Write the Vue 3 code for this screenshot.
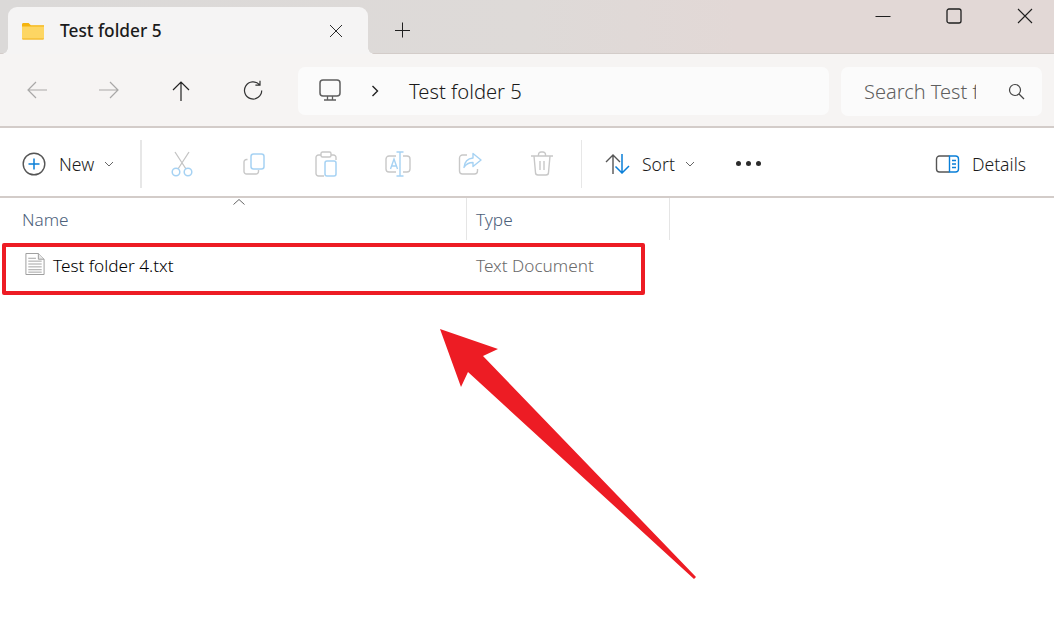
<template>
  <div class="explorer">
    <div class="titlebar">
      <div class="tab">
        <svg class="folder" width="22" height="18" viewBox="0 0 22 18">
          <path d="M0 2.500C0 1.700.6 1 1.400 1h5.200l2.200 2.200H22V5H0z" fill="#f5b40e"/>
          <path d="M0 4.500h22V16c0 .8-.6 1.500-1.400 1.500H1.400C.6 17.500 0 16.800 0 16z" fill="#fdd663"/>
          <path d="M0 16.500h22v.3c0 .4-.4.7-1 .7H1c-.6 0-1-.3-1-.7z" fill="#f2b21c"/>
        </svg>
        <span class="tab-title">Test folder 5</span>
        <svg class="tab-close" width="14" height="14" viewBox="0 0 14 14"><path d="M1 1l12 12M13 1L1 13" stroke="#2b2b2b" fill="none"/></svg>
      </div>
      <svg class="tab-add" width="16" height="16" viewBox="0 0 16 16"><path d="M8.500 .5v15M1 8.500h15" stroke="#1f1f1f" fill="none"/></svg>
      <div class="win-controls">
        <svg width="16" height="16" viewBox="0 0 16 16"><path d="M.5 8.500h15" stroke="#1f1f1f" fill="none"/></svg>
        <svg width="16" height="16" viewBox="0 0 16 16"><rect x="1" y="1" width="14" height="14" rx="2" stroke="#1f1f1f" stroke-width="1.300" fill="none"/></svg>
        <svg width="16" height="16" viewBox="0 0 16 16"><path d="M1 1l14 14M15 1L1 15" stroke="#1f1f1f" stroke-width="1.100" fill="none"/></svg>
      </div>
    </div>

    <div class="navbar">
      <div class="nav-buttons">
        <span class="nav-btn"><svg width="24" height="20" viewBox="0 0 24 20"><path d="M22 10H3M11 2l-8 8 8 8" stroke="#a9a8a7" stroke-width="1.200" fill="none"/></svg></span>
        <span class="nav-btn"><svg width="24" height="20" viewBox="0 0 24 20"><path d="M2 10h19M13 2l8 8-8 8" stroke="#a9a8a7" stroke-width="1.200" fill="none"/></svg></span>
        <span class="nav-btn"><svg width="20" height="22" viewBox="0 0 20 22"><path d="M10 21V2M2 10l8-8 8 8" stroke="#222" stroke-width="1.200" fill="none"/></svg></span>
        <span class="nav-btn"><svg width="20" height="20" viewBox="0 0 20 20"><path d="M16.500 4.700A8.600 8.600 0 1 0 18.700 10.500M17 .8v4.400h-4.600" stroke="#333" stroke-width="1.200" fill="none"/></svg></span>
      </div>
      <div class="address">
        <svg class="monitor" width="22" height="22" viewBox="0 0 22 22">
          <rect x="1" y="1" width="20" height="16" rx="3" stroke="#5f5f5f" stroke-width="1.500" fill="none"/>
          <path d="M8.500 17v3.500M13.500 17v3.500M5 21h12" stroke="#5f5f5f" stroke-width="1.300" fill="none"/>
        </svg>
        <svg class="crumb" width="8" height="12" viewBox="0 0 8 12"><path d="M1.500 1l5 5-5 5" stroke="#222" stroke-width="1.400" fill="none"/></svg>
        <span class="path-text">Test folder 5</span>
      </div>
      <div class="search">
        <span class="search-text">Search Test f</span>
        <svg width="17" height="17" viewBox="0 0 17 17"><circle cx="7" cy="7" r="5.500" stroke="#444" stroke-width="1.200" fill="none"/><path d="M11 11l5 5" stroke="#444" stroke-width="1.300" fill="none"/></svg>
      </div>
    </div>

    <div class="toolbar">
      <div class="new-btn">
        <svg width="24" height="24" viewBox="0 0 24 24">
          <circle cx="12" cy="12" r="10.800" stroke="#555" stroke-width="1.400" fill="none"/>
          <path d="M12 6.500v11M6.500 12h11" stroke="#0a7fd8" stroke-width="1.500" fill="none"/>
        </svg>
        <span>New</span>
        <svg class="chev" width="10" height="6" viewBox="0 0 10 6"><path d="M1 1l4 4 4-4" stroke="#666" fill="none"/></svg>
      </div>
      <i class="sep"></i>
      <div class="actions">
        <span class="act"><svg width="24" height="26" viewBox="0 0 24 26">
          <path d="M5 1l11 17M19 1L8 18" stroke="#c4c4c4" stroke-width="1.300" fill="none"/>
          <circle cx="6" cy="21" r="3.800" stroke="#a6d2f3" stroke-width="1.500" fill="none"/>
          <circle cx="18" cy="21" r="3.800" stroke="#a6d2f3" stroke-width="1.500" fill="none"/>
        </svg></span>
        <span class="act"><svg width="22" height="22" viewBox="0 0 22 22">
          <path d="M4.500 6.500H3.500A2.500 2.500 0 0 0 1 9v9.500A2.500 2.500 0 0 0 3.500 21H13a2.500 2.500 0 0 0 2.500-2.500V17" stroke="#c8c8c8" stroke-width="1.400" fill="none"/>
          <rect x="8" y="1" width="13" height="15" rx="2.500" stroke="#a6d2f3" stroke-width="1.500" fill="#fff"/>
        </svg></span>
        <span class="act"><svg width="22" height="26" viewBox="0 0 22 26">
          <path d="M6 4H3.500A2.500 2.500 0 0 0 1 6.500v16A2.500 2.500 0 0 0 3.500 25H9M16 4h2.500A2.500 2.500 0 0 1 21 6.500V9" stroke="#c8c8c8" stroke-width="1.400" fill="none"/>
          <rect x="6" y="1" width="10" height="5" rx="1.500" stroke="#c8c8c8" stroke-width="1.400" fill="#fff"/>
          <rect x="10" y="10" width="11" height="15" rx="2" stroke="#a6d2f3" stroke-width="1.500" fill="#fff"/>
        </svg></span>
        <span class="act"><svg width="26" height="26" viewBox="0 0 26 26">
          <path d="M11 5H4a3 3 0 0 0-3 3v10a3 3 0 0 0 3 3h7M18 5h4a3 3 0 0 1 3 3v10a3 3 0 0 1-3 3h-4" stroke="#c8c8c8" stroke-width="1.400" fill="none"/>
          <path d="M15 1v24M11.500 1h7M11.500 25h7M5.500 18l3.500-10 3.500 10M6.800 15h4.400" stroke="#a6d2f3" stroke-width="1.400" fill="none"/>
        </svg></span>
        <span class="act"><svg width="24" height="24" viewBox="0 0 24 24">
          <path d="M9 3H4.500A3 3 0 0 0 1.500 6v13a3 3 0 0 0 3 3h12a3 3 0 0 0 3-3v-2" stroke="#c8c8c8" stroke-width="1.400" fill="none"/>
          <path d="M15 1.500L23 8l-8 6.500v-4c-4 0-7 1.500-9 5 .5-5.500 3.500-9 9-9.500z" stroke="#a6d2f3" stroke-width="1.400" fill="#fff" stroke-linejoin="round"/>
        </svg></span>
        <span class="act"><svg width="22" height="25" viewBox="0 0 22 25">
          <path d="M0 5h22M7.500 5V3.500A2.500 2.500 0 0 1 10 1h2a2.500 2.500 0 0 1 2.500 2.500V5M3 5l1.500 16.500A2.500 2.500 0 0 0 7 24h8a2.500 2.500 0 0 0 2.500-2.500L19 5M9 10v9M13 10v9" stroke="#c8c8c8" stroke-width="1.400" fill="none"/>
        </svg></span>
      </div>
      <i class="sep sep-sort"></i>
      <div class="sort-btn">
        <svg width="26" height="20" viewBox="0 0 26 20">
          <path d="M8 20V1M1 8l7-7 7 7" stroke="#555" stroke-width="1.400" fill="none"/>
          <path d="M17 0v19M10.500 12.500l6.500 6.500 7-7" stroke="#0a7fd8" stroke-width="1.500" fill="none"/>
        </svg>
        <span>Sort</span>
        <svg class="chev" width="10" height="6" viewBox="0 0 10 6"><path d="M1 1l4 4 4-4" stroke="#666" fill="none"/></svg>
      </div>
      <div class="dots"><b></b><b></b><b></b></div>
      <div class="details-btn">
        <svg width="25" height="18" viewBox="0 0 24 18">
          <path d="M14 1H4a3 3 0 0 0-3 3v10a3 3 0 0 0 3 3h10" stroke="#555" stroke-width="1.400" fill="none"/>
          <path d="M14 1h6a3 3 0 0 1 3 3v10a3 3 0 0 1-3 3h-6zM16.500 5.500h4M16.500 9h4M16.500 12.500h4" stroke="#0a7fd8" stroke-width="1.400" fill="none"/>
        </svg>
        <span>Details</span>
      </div>
    </div>

    <div class="list-head">
      <div class="col-name">
        <span>Name</span>
        <svg class="caret" width="12" height="6" viewBox="0 0 12 6"><path d="M.5 5.500L6 .5l5.500 5" stroke="#666" fill="none"/></svg>
      </div>
      <div class="col-type"><span>Type</span></div>
    </div>
    <div class="row">
      <div class="cell-name">
        <svg width="20" height="22" viewBox="0 0 20 23">
          <path d="M.5.500h13l6 6v16H.500z" fill="#fff" stroke="#9a9a9a"/>
          <path d="M13.500.5v6h6" fill="#e8e8e8" stroke="#9a9a9a"/>
          <path d="M3 5.500h8M3 8.500h14M3 11.500h14M3 14.500h14M3 17.500h14M3 20h14" stroke="#a0a0a0" fill="none"/>
        </svg>
        <span>Test folder 4.txt</span>
      </div>
      <div class="cell-type">Text Document</div>
    </div>

    <div class="mark-box"></div>
    <svg class="mark-arrow" width="1054" height="631" viewBox="0 0 1054 631">
      <path d="M440 329L498 349 483 356 696 577 694 579 468 372 461 387z" fill="#ed1c24"/>
    </svg>
  </div>
</template>

<script setup>
</script>

<style>
html, body {
  margin: 0;
  background: #fff;
}
</style>

<style scoped>
.explorer {
  position: relative;
  width: 1054px;
  height: 631px;
  overflow: hidden;
  background: #fff;
  font-family: "Noto Sans", sans-serif;
  color: #1b1b1b;
}
.titlebar {
  height: 54px;
  box-sizing: border-box;
  display: flex;
  align-items: flex-end;
  padding-left: 8px;
  background: linear-gradient(90deg, #dbd9d8 0%, #dedad8 50%, #e2d8d6 70%, #e2d8d6 100%);
  border-bottom: 1px solid #d3ccc9;
}
.tab {
  position: relative;
  top: 1px;
  width: 360px;
  height: 47px;
  box-sizing: border-box;
  display: flex;
  align-items: center;
  padding: 0 25px 0 14px;
  background: #f5f4f4;
  border-radius: 9px 9px 0 0;
}
.tab::before,
.tab::after {
  content: "";
  position: absolute;
  bottom: 0;
  width: 6px;
  height: 6px;
}
.tab::before {
  left: -6px;
  background: radial-gradient(circle at 0 0, transparent 5.500px, #f5f4f4 6px);
}
.tab::after {
  right: -6px;
  background: radial-gradient(circle at 100% 0, transparent 5.500px, #f5f4f4 6px);
}
.folder {
  margin-right: 16px;
}
.tab-title {
  flex: 1;
  font-size: 17.300px;
  font-weight: 500;
}
.tab-add {
  margin-left: 26px;
  margin-bottom: 15px;
}
.win-controls {
  margin-left: auto;
  align-self: flex-start;
  display: flex;
  gap: 55px;
  padding: 8px 21px 0 0;
}
.navbar {
  height: 74px;
  box-sizing: border-box;
  display: flex;
  align-items: center;
  padding: 2px 12px 0 1px;
  background: #f6f4f3;
  border-bottom: 2px solid #d3ccc9;
}
.nav-buttons {
  display: flex;
  width: 297px;
  flex: none;
}
.nav-btn {
  width: 72px;
  display: flex;
  justify-content: center;
}
.address {
  flex: 1;
  height: 48px;
  box-sizing: border-box;
  display: flex;
  align-items: center;
  padding-left: 21px;
  background: #fbfbfb;
  border-radius: 7px;
}
.monitor {
  margin-bottom: 2px;
}
.crumb {
  margin-left: 30px;
}
.path-text {
  margin-left: 30px;
  font-size: 20.200px;
  font-weight: 300;
}
.search {
  width: 201px;
  height: 49px;
  margin-left: 12px;
  box-sizing: border-box;
  display: flex;
  align-items: center;
  justify-content: space-between;
  padding: 0 17px 0 23px;
  background: #fbfbfb;
  border-radius: 7px;
  color: #5f5f5f;
}
.search-text {
  width: 112px;
  margin-right: 2px;
  overflow: hidden;
  white-space: nowrap;
  font-size: 20px;
  font-weight: 300;
}
.toolbar {
  height: 70px;
  box-sizing: border-box;
  display: flex;
  align-items: center;
  padding: 3px 0 0 22px;
  border-bottom: 2px solid #d3ccc9;
  font-size: 17.600px;
  font-weight: 350;
}
.new-btn {
  width: 119px;
  display: flex;
  align-items: center;
  flex: none;
}
.new-btn span {
  margin-left: 13px;
}
.chev {
  margin-left: 10px;
}
.sep {
  width: 1.500px;
  height: 48px;
  background: #e7e7e7;
  flex: none;
  margin-left: -1px;
}
.actions {
  display: flex;
  width: 432px;
  margin-left: 4px;
  flex: none;
}
.act {
  width: 72px;
  height: 30px;
  display: flex;
  align-items: center;
  justify-content: center;
}
.sep-sort {
  margin-left: 3px;
}
.sort-btn {
  display: flex;
  align-items: center;
  margin-left: 23px;
  flex: none;
}
.sort-btn span {
  margin-left: 11px;
}
.dots {
  display: flex;
  gap: 5px;
  margin-left: 41px;
}
.dots b {
  width: 5px;
  height: 5px;
  border-radius: 50%;
  background: #2b2b2b;
}
.details-btn {
  display: flex;
  align-items: center;
  margin-left: auto;
  padding-right: 28px;
}
.details-btn span {
  margin-left: 12px;
}
.list-head {
  height: 42px;
  display: flex;
  font-size: 17.200px;
  font-weight: 300;
  color: #4c607a;
}
.col-name {
  position: relative;
  width: 444px;
  padding-left: 22px;
  display: flex;
  align-items: center;
  border-right: 1px solid #e5e5e5;
}
.caret {
  position: absolute;
  left: 233px;
  top: 1px;
}
.col-type {
  width: 193px;
  padding-left: 9px;
  display: flex;
  align-items: center;
  border-right: 1px solid #e5e5e5;
}
.row {
  height: 52px;
  display: flex;
  font-size: 17.200px;
  font-weight: 300;
  margin-top: 3px;
}
.cell-name {
  width: 467px;
  box-sizing: border-box;
  padding-left: 25px;
  display: flex;
  align-items: flex-start;
  padding-top: 10px;
  color: #000;
}
.cell-name span {
  margin-left: 8px;
  margin-top: 1px;
  line-height: 24px;
  font-weight: 350;
}
.cell-type {
  padding: 11px 0 0 9px;
  line-height: 24px;
  color: #6a6a6a;
}
.mark-box {
  position: absolute;
  left: 2px;
  top: 243px;
  width: 643px;
  height: 52px;
  box-sizing: border-box;
  border: 4px solid #ed1c24;
  border-radius: 2px;
}
.mark-arrow {
  position: absolute;
  left: 0;
  top: 0;
}
</style>
